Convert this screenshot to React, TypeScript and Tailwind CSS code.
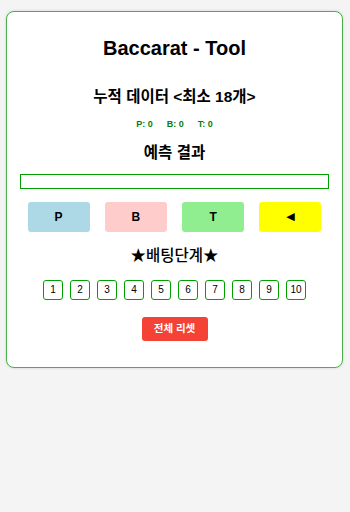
import React from 'react';

const font = { fontFamily: '"Liberation Sans", Arial, "Noto Sans CJK KR", sans-serif' };

const steps = [1, 2, 3, 4, 5, 6, 7, 8, 9, 10];

const App = () => {
  return (
    <div className="min-h-screen bg-[#f4f4f4] pt-[11px]" style={font}>
      <div className="mx-[6px] w-[337px] bg-white border border-[#4cae4c] rounded-[8px] shadow-[0_0_3px_rgba(0,0,0,0.15)] px-[13px] pt-[24px] pb-[26px] text-center text-black">
        <h1 className="text-[20px] leading-[24px] font-bold">Baccarat - Tool</h1>

        <h2 className="mt-[27px] text-[15.5px] leading-[20px] font-bold">누적 데이터 &lt;최소 18개&gt;</h2>

        <div className="mt-[11px] text-[9px] leading-[12px] font-bold text-[#0a7d0a]">
          <span className="mx-[7px]">P: 0</span>
          <span className="mx-[7px]">B: 0</span>
          <span className="mx-[7px]">T: 0</span>
        </div>

        <h2 className="mt-[13px] text-[15.5px] leading-[20px] font-semibold">예측 결과</h2>

        <div className="mt-[11px] h-[15px] border border-[#00a000]" />

        <div className="mt-[13px] flex justify-around">
          <button className="w-[62px] h-[30px] rounded-[3px] bg-[#add8e6] text-[12px] font-bold">P</button>
          <button className="w-[62px] h-[30px] rounded-[3px] bg-[#ffcccc] text-[12px] font-bold">B</button>
          <button className="w-[62px] h-[30px] rounded-[3px] bg-[#90ee90] text-[12px] font-bold">T</button>
          <button
            className="w-[62px] h-[30px] rounded-[3px] bg-[#ffff00] text-[11px]"
            style={{ fontFamily: '"DejaVu Sans", sans-serif' }}
          >
            ◀
          </button>
        </div>

        <h2 className="mt-[14px] text-[15.5px] leading-[20px] font-medium">★배팅단계★</h2>

        <div className="mt-[14px] flex justify-center gap-[7px]">
          {steps.map((n) => (
            <button
              key={n}
              className="w-[20px] h-[20px] border border-[#00a000] rounded-[3px] bg-white text-[10px] leading-none"
            >
              {n}
            </button>
          ))}
        </div>

        <button className="mt-[17px] w-[66px] h-[24px] rounded-[3px] bg-[#f44336] text-white text-[10.5px] font-bold">
          전체 리셋
        </button>
      </div>
    </div>
  );
};

export default App;
